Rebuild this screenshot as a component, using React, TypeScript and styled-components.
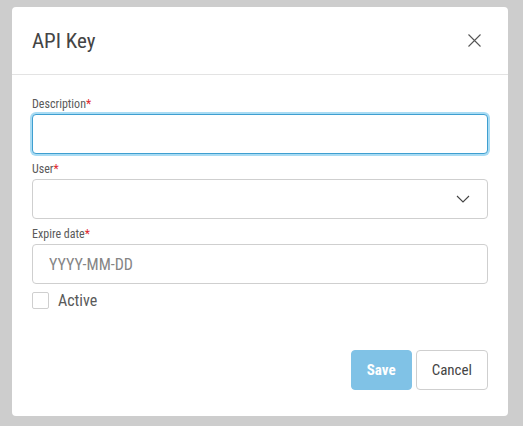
import styled, { createGlobalStyle } from "styled-components";

const GlobalStyle = createGlobalStyle`
  html, body {
    margin: 0;
    background: #cdcdcd;
  }
  body {
    font-family: Roboto, "Liberation Sans", sans-serif;
    font-stretch: 85%;
    font-weight: 400;
  }
`;

const DialogStyle = styled.div`
  box-sizing: border-box;
  width: 496px;
  height: 409px;
  margin: 7px 0 0 12px;
  background: #fff;
  border-radius: 4px;
  display: flex;
  flex-direction: column;
`;

const HeaderStyle = styled.div`
  height: 68px;
  box-sizing: border-box;
  display: flex;
  align-items: center;
  justify-content: space-between;
  padding: 0 27px 0 20px;
  border-bottom: 1px solid #e3e3e3;
`;

const TitleStyle = styled.h2`
  margin: 0;
  font-size: 21px;
  font-weight: 400;
  color: #444;
`;

const CloseStyle = styled.button`
  border: none;
  background: none;
  padding: 0;
  width: 13px;
  height: 13px;
  display: flex;
  cursor: pointer;
`;

const BodyStyle = styled.div`
  flex: 1;
  padding: 21px 20px 0;
  display: flex;
  flex-direction: column;
`;

const FieldStyle = styled.div`
  display: flex;
  flex-direction: column;
  margin-bottom: 7px;
`;

const LabelStyle = styled.label`
  font-size: 12px;
  line-height: 16px;
  color: #5a5a5a;
  margin-bottom: 2px;
`;

const RequiredStyle = styled.span`
  color: #e0262d;
`;

const InputStyle = styled.input<{ $focused?: boolean }>`
  box-sizing: border-box;
  height: 40px;
  width: 100%;
  border: 1px solid ${(p) => (p.$focused ? "#3f9fd0" : "#cfcfcf")};
  box-shadow: ${(p) => (p.$focused ? "0 0 0 2px #a9dcf4" : "none")};
  border-radius: 4px;
  padding: 0 16px;
  font-family: inherit;
  font-stretch: 85%;
  font-size: 16px;
  color: #333;
  outline: none;
  &::placeholder {
    color: #858585;
  }
`;

const SelectStyle = styled.div`
  box-sizing: border-box;
  height: 40px;
  border: 1px solid #cfcfcf;
  border-radius: 4px;
  display: flex;
  align-items: center;
  justify-content: flex-end;
  padding-right: 17px;
`;

const CheckRowStyle = styled.label`
  display: flex;
  align-items: center;
  gap: 9px;
  margin-top: 1px;
  font-size: 16px;
  line-height: 17px;
  color: #5a5a5a;
`;

const CheckboxStyle = styled.span`
  box-sizing: border-box;
  width: 17px;
  height: 17px;
  border: 1px solid #cfcfcf;
  border-radius: 2px;
  background: #fff;
`;

const FooterStyle = styled.div`
  display: flex;
  justify-content: flex-end;
  gap: 4px;
  padding: 0 20px 26px;
`;

const ButtonStyle = styled.button<{ $primary?: boolean }>`
  box-sizing: border-box;
  height: 40px;
  padding: 0 15px;
  border-radius: 4px;
  font-family: inherit;
  font-stretch: 85%;
  font-size: 15px;
  cursor: pointer;
  border: 1px solid ${(p) => (p.$primary ? "#80c2e6" : "#cfcfcf")};
  background: ${(p) => (p.$primary ? "#80c2e6" : "#fff")};
  color: ${(p) => (p.$primary ? "#fff" : "#444")};
  font-weight: ${(p) => (p.$primary ? 700 : 400)};
`;

export default function App() {
  return (
    <>
      <GlobalStyle />
      <DialogStyle>
        <HeaderStyle>
          <TitleStyle>API Key</TitleStyle>
          <CloseStyle aria-label="Close">
            <svg width="13" height="13" viewBox="0 0 13 13">
              <path d="M0.5 0.5 L12.5 12.5 M12.5 0.5 L0.5 12.5" stroke="#555" strokeWidth="1.1" fill="none" />
            </svg>
          </CloseStyle>
        </HeaderStyle>
        <BodyStyle>
          <FieldStyle>
            <LabelStyle>
              Description<RequiredStyle>*</RequiredStyle>
            </LabelStyle>
            <InputStyle $focused type="text" />
          </FieldStyle>
          <FieldStyle>
            <LabelStyle>
              User<RequiredStyle>*</RequiredStyle>
            </LabelStyle>
            <SelectStyle>
              <svg width="14" height="8" viewBox="0 0 14 8">
                <path d="M1 1 L7 7 L13 1" stroke="#444" strokeWidth="1.1" fill="none" />
              </svg>
            </SelectStyle>
          </FieldStyle>
          <FieldStyle>
            <LabelStyle>
              Expire date<RequiredStyle>*</RequiredStyle>
            </LabelStyle>
            <InputStyle type="text" placeholder="YYYY-MM-DD" />
          </FieldStyle>
          <CheckRowStyle>
            <CheckboxStyle />
            Active
          </CheckRowStyle>
        </BodyStyle>
        <FooterStyle>
          <ButtonStyle $primary>Save</ButtonStyle>
          <ButtonStyle>Cancel</ButtonStyle>
        </FooterStyle>
      </DialogStyle>
    </>
  );
}
